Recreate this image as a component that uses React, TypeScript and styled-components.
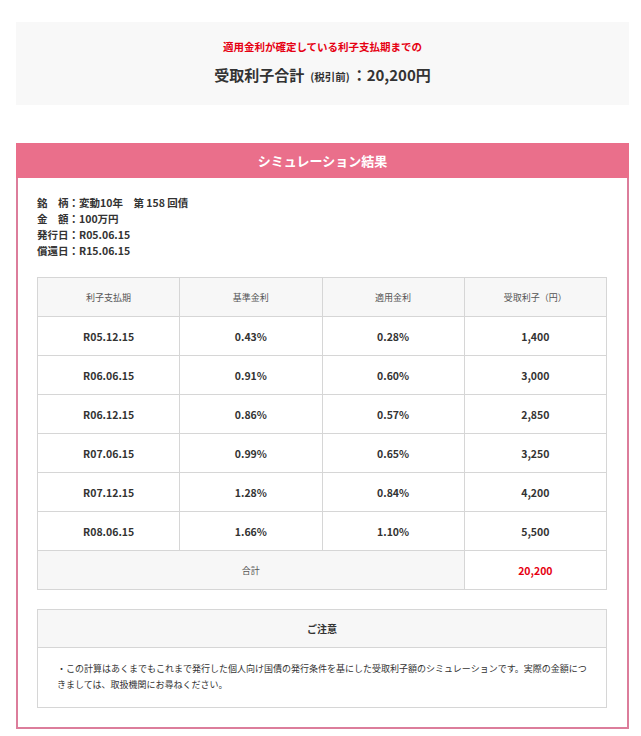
import React from "react";
import styled, { createGlobalStyle } from "styled-components";

const GlobalStyle = createGlobalStyle`
  html, body { margin: 0; padding: 0; background: #ffffff; }
  body {
    font-family: "Noto Sans CJK JP", "Noto Sans", sans-serif;
    color: #333333;
  }
`;

const Page = styled.div`
  width: 613px;
  padding: 22px 0 0 16px;
`;

const SummaryBox = styled.section`
  background: #f8f8f8;
  height: 83px;
  display: flex;
  flex-direction: column;
  align-items: center;
  padding-top: 16px;
  box-sizing: border-box;
`;

const SummaryNote = styled.p`
  margin: 0;
  color: #e60012;
  font-size: 10.5px;
  font-weight: 700;
  line-height: 18px;
`;

const SummaryTotal = styled.p`
  margin: 8px 0 0;
  font-size: 15px;
  font-weight: 700;
  line-height: 22px;
  color: #333333;
`;

const Small = styled.span`
  font-size: 10.5px;
  margin: 0 2px 0 6px;
`;

const ResultBox = styled.section`
  margin-top: 38px;
  border: 2px solid #dc7d9b;
`;

const ResultHeader = styled.h2`
  margin: -2px -2px 0;
  height: 35px;
  background: #ea6f8b;
  color: #ffffff;
  font-size: 13px;
  font-weight: 700;
  display: flex;
  align-items: center;
  justify-content: center;
`;

const ResultBody = styled.div`
  padding: 17px 20px 19px 19px;
`;

const InfoList = styled.dl`
  margin: 0;
  font-size: 10.5px;
  font-weight: 700;
  line-height: 16px;
  color: #333333;
`;

const InfoRow = styled.div`
  display: flex;
`;

const InfoLabel = styled.dt`
  margin: 0;
`;

const InfoValue = styled.dd`
  margin: 0;
`;

const Table = styled.table`
  margin-top: 18px;
  width: 100%;
  border-collapse: collapse;
  table-layout: fixed;
`;

const HeadCell = styled.th`
  height: 38px;
  background: #f7f7f7;
  border: 1px solid #d6d6d6;
  font-size: 9px;
  font-weight: 400;
  color: #555555;
  text-align: center;
  padding: 0;
`;

const Cell = styled.td<{ $tone?: "label" | "red" }>`
  height: 38px;
  border: 1px solid #d6d6d6;
  text-align: center;
  padding: 0;
  font-size: ${(p) => (p.$tone === "label" ? "9px" : "10.5px")};
  font-weight: ${(p) => (p.$tone === "label" ? 400 : 700)};
  color: ${(p) => (p.$tone === "red" ? "#e60012" : p.$tone === "label" ? "#555555" : "#333333")};
  background: ${(p) => (p.$tone === "label" ? "#f7f7f7" : "#ffffff")};
`;

const Notice = styled.div`
  margin-top: 19px;
  border: 1px solid #d6d6d6;
`;

const NoticeHeader = styled.div`
  height: 37px;
  background: #f7f7f7;
  border-bottom: 1px solid #d6d6d6;
  display: flex;
  align-items: center;
  justify-content: center;
  font-size: 10px;
  font-weight: 700;
  color: #333333;
`;

const NoticeBody = styled.p`
  margin: 0;
  padding: 13px 19px 14px;
  font-size: 9px;
  line-height: 16px;
  color: #333333;
  min-height: 32px;
`;

const rows = [
  ["R05.12.15", "0.43%", "0.28%", "1,400"],
  ["R06.06.15", "0.91%", "0.60%", "3,000"],
  ["R06.12.15", "0.86%", "0.57%", "2,850"],
  ["R07.06.15", "0.99%", "0.65%", "3,250"],
  ["R07.12.15", "1.28%", "0.84%", "4,200"],
  ["R08.06.15", "1.66%", "1.10%", "5,500"],
];

export default function App() {
  return (
    <>
      <GlobalStyle />
      <Page>
        <SummaryBox>
          <SummaryNote>適用金利が確定している利子支払期までの</SummaryNote>
          <SummaryTotal>
            受取利子合計<Small>(税引前)</Small>：20,200円
          </SummaryTotal>
        </SummaryBox>

        <ResultBox>
          <ResultHeader>シミュレーション結果</ResultHeader>
          <ResultBody>
            <InfoList>
              <InfoRow>
                <InfoLabel>銘　柄：</InfoLabel>
                <InfoValue>変動10年　第 158 回債</InfoValue>
              </InfoRow>
              <InfoRow>
                <InfoLabel>金　額：</InfoLabel>
                <InfoValue>100万円</InfoValue>
              </InfoRow>
              <InfoRow>
                <InfoLabel>発行日：</InfoLabel>
                <InfoValue>R05.06.15</InfoValue>
              </InfoRow>
              <InfoRow>
                <InfoLabel>償還日：</InfoLabel>
                <InfoValue>R15.06.15</InfoValue>
              </InfoRow>
            </InfoList>

            <Table>
              <thead>
                <tr>
                  <HeadCell>利子支払期</HeadCell>
                  <HeadCell>基準金利</HeadCell>
                  <HeadCell>適用金利</HeadCell>
                  <HeadCell>受取利子（円）</HeadCell>
                </tr>
              </thead>
              <tbody>
                {rows.map((r) => (
                  <tr key={r[0]}>
                    {r.map((v, i) => (
                      <Cell key={i}>{v}</Cell>
                    ))}
                  </tr>
                ))}
                <tr>
                  <Cell $tone="label" colSpan={3}>
                    合計
                  </Cell>
                  <Cell $tone="red">20,200</Cell>
                </tr>
              </tbody>
            </Table>

            <Notice>
              <NoticeHeader>ご注意</NoticeHeader>
              <NoticeBody>
                ・この計算はあくまでもこれまで発行した個人向け国債の発行条件を基にした受取利子額のシミュレーションです。実際の金額につきましては、取扱機関にお尋ねください。
              </NoticeBody>
            </Notice>
          </ResultBody>
        </ResultBox>
      </Page>
    </>
  );
}
